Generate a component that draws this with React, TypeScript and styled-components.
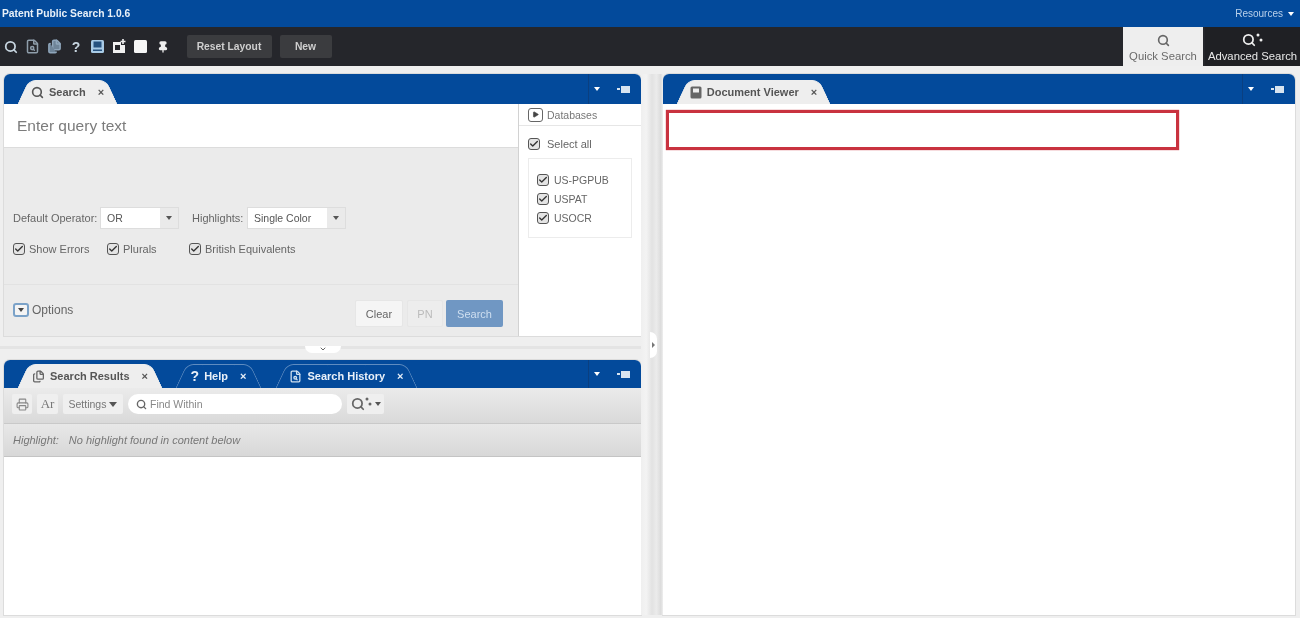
import React from "react";
import styled, { createGlobalStyle } from "styled-components";
import { Search, Printer, ChevronDown, Files, FileSearch, Check, Play, Pin } from "lucide-react";

const Global = createGlobalStyle`
  html, body { margin: 0; padding: 0; height: 100%; overflow: hidden; background: #efefef; }
  #root { height: 100%; }
  * { box-sizing: border-box; }
`;

const Page = styled.div`
  width: 1300px; height: 618px; display: flex; flex-direction: column;
  font-family: "Liberation Sans", Arial, sans-serif; color: #555; font-size: 11px;
  filter: blur(0.7px); background: #efefef; overflow: hidden;
`;
const TitleBar = styled.header`
  height: 27px; flex: none; background: #034a9b; color: #fff; display: flex; align-items: center; justify-content: space-between;
  padding: 0 6px 0 2px;
`;
const Brand = styled.span`font-size: 10.3px; font-weight: 700; color: #e8f0f8;`;
const ResourceLink = styled.span`font-size: 10px; color: #b9d0ea; display: flex; align-items: center; gap: 5px;`;
const Caret = styled.i<{ $c?: string; $s?: number }>`
  display: inline-block; width: 0; height: 0; flex: none;
  border-left: ${p => p.$s ?? 3}px solid transparent; border-right: ${p => p.$s ?? 3}px solid transparent;
  border-top: ${p => (p.$s ?? 3) + 1}px solid ${p => p.$c ?? "#fff"};
`;
const ToolBar = styled.div`
  height: 39px; flex: none; background: #25262b; display: flex; align-items: center;
`;
const IconSlot = styled.span`width: 21.7px; height: 20px; display: flex; align-items: center; justify-content: center; color: #c7d5e0; flex: none; font-weight: 700; font-size: 14px;`;
const DarkButton = styled.button<{ $w: number }>`
  width: ${p => p.$w}px; height: 23px; margin-left: 8px; background: #3b3c3f; color: #cfcfcf; border: 0; border-radius: 2px;
  font: 700 10.3px "Liberation Sans", Arial, sans-serif; padding: 0;
  &:first-of-type { margin-left: 13px; }
`;
const ModeTabs = styled.div`margin-left: auto; display: flex; height: 100%; gap: 2px;`;
const ModeTab = styled.div<{ $active?: boolean; $w: number }>`
  width: ${p => p.$w}px; height: 39px; display: flex; flex-direction: column; align-items: center; justify-content: flex-end; padding-bottom: 4px; gap: 3px;
  background: ${p => (p.$active ? "#eeeeee" : "#1f2024")}; color: ${p => (p.$active ? "#6b6b6b" : "#e8e8e8")}; font-size: 11.3px; white-space: nowrap;
`;
const Main = styled.main`
  flex: 1; display: flex; padding: 8px 5px 3px 4px; min-height: 0;
`;
const LeftColumn = styled.div`width: 637px; flex: none; display: flex; flex-direction: column;`;
const VSplitter = styled.div`
  width: 22px; flex: none; position: relative;
  background: linear-gradient(90deg, #efefef 0, #f3f3f3 24%, #e2e2e2 50%, #ebebeb 70%, #dcdcdc 90%, #efefef 100%);
`;
const VNotch = styled.span`
  position: absolute; left: 9px; top: 258px; width: 7px; height: 26px; background: #fff; border-radius: 0 8px 8px 0;
  display: flex; align-items: center; justify-content: center;
  &::after { content: ""; border-left: 3px solid #777; border-top: 3px solid transparent; border-bottom: 3px solid transparent; }
`;
const HSplitter = styled.div`
  height: 24px; flex: none; position: relative; display: flex; justify-content: center; align-items: center;
  &::before { content: ""; position: absolute; left: -4px; right: 0; top: 10px; height: 3px; background: #e4e4e4; }
`;
const HNotch = styled.span`
  position: relative; top: 1px; width: 36px; height: 7px; background: #fff; border-radius: 0 0 10px 10px; display: flex; align-items: center; justify-content: center;
`;
const Panel = styled.section<{ $h?: number; $grow?: boolean }>`
  ${p => (p.$h ? `height:${p.$h}px;flex:none;` : "")} ${p => (p.$grow ? "flex:1;min-height:0;" : "")}
  display: flex; flex-direction: column; background: #fff; box-shadow: 0 0 0 1px #dcdcdc; border-radius: 6px 6px 0 0;
`;
const RightPanel = styled(Panel)`flex: 1; min-width: 0;`;
const PanelHead = styled.div<{ $h: number }>`
  height: ${p => p.$h}px; flex: none; background: #034a9b; border-radius: 6px 6px 0 0; display: flex; align-items: flex-end; padding-left: 13px; overflow: hidden;
`;
const Tab = styled.div<{ $w: number; $active?: boolean; $h: number; $ml?: number }>`
  position: relative; width: ${p => p.$w}px; height: ${p => p.$h}px; margin-left: ${p => p.$ml ?? 0}px; flex: none;
  display: flex; align-items: center; justify-content: center; gap: 5px; font-size: 11px; font-weight: 700;
  color: ${p => (p.$active ? "#555" : "#e9f0f8")};
  z-index: 0;
  &::before, &::after {
    content: ""; position: absolute; top: 0; bottom: -1px; width: 55%; z-index: -1;
    background: ${p => (p.$active ? "#eeeeee" : "transparent")};
    border-top: 1px solid ${p => (p.$active ? "#eeeeee" : "#5f8cc0")};
  }
  &::before { left: 0; transform-origin: bottom left; transform: skewX(-25deg); border-left: 1px solid ${p => (p.$active ? "#eeeeee" : "#5f8cc0")}; border-right: 0; border-radius: 7px 0 0 0; }
  &::after { right: 0; transform-origin: bottom right; transform: skewX(25deg); border-right: 1px solid ${p => (p.$active ? "#eeeeee" : "#5f8cc0")}; border-radius: 0 7px 0 0; }
`;
const TabClose = styled.span<{ $light?: boolean }>`font-size: 11px; margin-left: 7px; font-weight: 700; color: ${p => (p.$light ? "#e9f0f8" : "#555")};`;
const HeadControls = styled.div<{ $h: number }>`
  margin-left: auto; width: 53px; height: ${p => p.$h}px; align-self: flex-start; border-left: 1px solid #0a3f80; display: flex; align-items: center; padding-left: 5px; gap: 21px; flex: none;
`;
const MiniList = styled.span`
  width: 9px; height: 7px; background: #d8e4f0; position: relative; flex: none;
  &::before { content: ""; position: absolute; left: -4px; top: 2.5px; width: 3px; height: 2px; background: #d8e4f0; }
`;
const SearchBody = styled.div`flex: 1; display: flex; min-height: 0;`;
const QueryColumn = styled.div`width: 515px; flex: none; display: flex; flex-direction: column; background: #ebebeb; border-right: 1px solid #d2d2d2;`;
const QueryInput = styled.div`
  height: 44px; flex: none; background: #fff; border-bottom: 1px solid #dcdcdc; padding: 13px 0 0 13px; font-size: 15.5px; color: #7c7c7c; line-height: 18px;
`;
const SelectRow = styled.div`margin-top: 60px; display: flex; align-items: center; padding-left: 9px; height: 20px;`;
const FieldLabel = styled.span<{ $ml?: number; $w: number }>`width: ${p => p.$w}px; margin-left: ${p => p.$ml ?? 0}px; font-size: 11px; color: #666; white-space: nowrap; flex: none;`;
const SelectBox = styled.div<{ $w: number }>`
  width: ${p => p.$w}px; height: 20px; background: #fff; box-shadow: 0 0 0 1px #ddd; display: flex; align-items: center; flex: none; padding-left: 6px; font-size: 10.5px; color: #555;
`;
const SelectArrow = styled.span`
  margin-left: auto; width: 18px; height: 100%; background: #eaeaea; display: flex; align-items: center; justify-content: center;
`;
const CheckRow = styled.div`
  margin-top: 13px; display: flex; align-items: center; padding-left: 9px; height: 16px;
`;
const CheckItem = styled.span<{ $w?: number }>`
  ${p => (p.$w ? `width:${p.$w}px;` : "")} flex: none; display: flex; align-items: center; gap: 4px; font-size: 11px; color: #666; white-space: nowrap;
`;
const CheckBox = styled.span`
  width: 12px; height: 12px; border: 1.5px solid #555; border-radius: 3px; background: #e4e4e4; display: flex; align-items: center; justify-content: center; color: #333; flex: none;
`;
const QueryFoot = styled.div`
  height: 51px; margin-top: 27px; border-top: 1px solid #e2e2e2; display: flex; padding: 15px 15px 0 9px; align-items: flex-start;
`;
const OptionsToggle = styled.span`
  display: flex; align-items: center; gap: 3px; font-size: 12px; color: #666; height: 20px;
`;
const OptionsIcon = styled.span`
  width: 16px; height: 14px; border: 2px solid #7ba2c8; border-radius: 3px; display: flex; align-items: center; justify-content: center; background: #f4f4f4;
`;
const Buttons = styled.div`margin-left: auto; display: flex; gap: 4px;`;
const PlainButton = styled.button<{ $w: number; $muted?: boolean }>`
  width: ${p => p.$w}px; height: 27px; padding: 0; border: 1px solid #e6e6e6; border-radius: 2px; background: ${p => (p.$muted ? "#ededed" : "#f5f5f5")};
  color: ${p => (p.$muted ? "#bbb" : "#666")}; font: 11px "Liberation Sans", Arial, sans-serif;
`;
const PrimaryButton = styled.button`
  width: 57px; height: 27px; padding: 0; border: 0; border-radius: 2px; background: #7097c3; color: #cfdff0; font: 11px "Liberation Sans", Arial, sans-serif; margin-left: -1px;
`;
const DbColumn = styled.aside`flex: 1; display: flex; flex-direction: column; background: #fff;`;
const DbHead = styled.div`
  height: 22px; flex: none; border-bottom: 1px solid #e6e6e6; display: flex; align-items: center; padding-left: 9px; gap: 4px; font-size: 10.5px; color: #777;
`;
const DbPlay = styled.span`
  width: 15px; height: 14px; border: 1.5px solid #666; border-radius: 3px; display: flex; align-items: center; justify-content: center; color: #444;
`;
const SelectAll = styled(CheckItem)`margin: 11px 0 0 9px; gap: 7px; height: 13px;`;
const DbBox = styled.div`
  margin: 8px 9px 0 9px; height: 80px; border: 1px solid #ececec; padding: 14px 0 0 8px; display: flex; flex-direction: column; gap: 6px;
`;
const DbItem = styled(CheckItem)`height: 13px; gap: 5px; font-size: 10.5px;`;
const ResultsTools = styled.div`
  height: 36px; flex: none; background: linear-gradient(#ebebeb, #d9d9d9); border-bottom: 1px solid #c9c9c9; display: flex; align-items: center; padding: 0 0 3px 8px; gap: 5px;
`;
const ToolBtn = styled.span<{ $w: number }>`
  width: ${p => p.$w}px; height: 20px; background: #efefef; border-radius: 2px; display: flex; align-items: center; justify-content: center; gap: 3px; flex: none; font-size: 10.5px; color: #777;
`;
const FontToolGlyph = styled.span`font-family: "Liberation Serif", serif; font-size: 13px; color: #777;`;
const FindWithin = styled.div`
  width: 214px; height: 20px; flex: none; background: #fff; border-radius: 10px; display: flex; align-items: center; padding-left: 8px; gap: 3px; font-size: 10.5px; color: #888;
`;
const HighlightBar = styled.div`
  height: 33px; flex: none; background: linear-gradient(#e8e8e8, #d8d8d8); border-bottom: 1px solid #c4c4c4; display: flex; align-items: center; padding-left: 9px; gap: 10px; font-style: italic; font-size: 11px; color: #777;
`;
const ViewerBody = styled.div`flex: 1; padding: 6px 0 0 3px; background: #fff;`;
const RedBox = styled.div`width: 513px; height: 40px; border: 3px solid #c9323f; box-shadow: 0 0 1px #c9323f;`;
const FillWhite = styled.div`flex: 1; background: #fff;`;
const AdvGlyph = styled.span<{ $c: string }>`display: flex; align-items: flex-start; color: ${p => p.$c};`;

const Ck = () => <CheckBox><Check size={10} strokeWidth={3.2} /></CheckBox>;
const BookIcon = () => (
  <svg width="12" height="13" viewBox="0 0 12 13"><rect x=".5" y=".5" width="11" height="12" rx="1.5" fill="#666" /><rect x="3" y="2.5" width="6" height="4" fill="#eee" /></svg>
);
const DocIcon = () => (
  <svg width="15" height="15" viewBox="0 0 15 15"><rect x="1" y="1" width="13" height="13" rx="1.5" fill="#a9cbe6" /><rect x="3.5" y="2.5" width="8" height="6" fill="#26527f" /><rect x="3" y="10.5" width="9" height="1.5" fill="#26527f" /></svg>
);
const NewDocIcon = () => (
  <svg width="15" height="15" viewBox="0 0 15 15"><path d="M1 3h8v3h4v8H1z" fill="#f0f0f0" /><rect x="3" y="6" width="5" height="5" fill="#25262b" /><path d="M11 0v5M8.5 2.5h5" stroke="#f0f0f0" strokeWidth="1.6" /></svg>
);
const AdvIcon = ({ c }: { c: string }) => (
  <AdvGlyph $c={c}>
    <Search size={14} strokeWidth={3} />
    <svg width="7" height="10" viewBox="0 0 7 10"><circle cx="2" cy="2" r="1.5" fill={c} /><circle cx="5" cy="7" r="1.5" fill={c} /></svg>
  </AdvGlyph>
);
const Controls = ({ h }: { h: number }) => (
  <HeadControls $h={h}><Caret $s={3} /><MiniList /></HeadControls>
);

export default function App() {
  return (
    <Page>
      <Global />
      <TitleBar>
        <Brand>Patent Public Search 1.0.6</Brand>
        <ResourceLink>Resources <Caret /></ResourceLink>
      </TitleBar>
      <ToolBar>
        <IconSlot><Search size={14} strokeWidth={3} /></IconSlot>
        <IconSlot><FileSearch size={15} strokeWidth={2.4} color="#8f9eab" /></IconSlot>
        <IconSlot><Files size={15} strokeWidth={2.4} color="#8fa6bb" fill="#6f8599" /></IconSlot>
        <IconSlot>?</IconSlot>
        <IconSlot><DocIcon /></IconSlot>
        <IconSlot><NewDocIcon /></IconSlot>
        <IconSlot><svg width="13" height="13" viewBox="0 0 13 13"><rect width="13" height="13" rx="1.5" fill="#f6f6f6" /></svg></IconSlot>
        <IconSlot><Pin size={12} strokeWidth={2.6} fill="#eee" color="#eee" /></IconSlot>
        <DarkButton $w={85}>Reset Layout</DarkButton>
        <DarkButton $w={52}>New</DarkButton>
        <ModeTabs>
          <ModeTab $active $w={80}><Search size={13} strokeWidth={3} color="#666" />Quick Search</ModeTab>
          <ModeTab $w={95}><AdvIcon c="#eee" />Advanced Search</ModeTab>
        </ModeTabs>
      </ToolBar>
      <Main>
        <LeftColumn>
          <Panel $h={262}>
            <PanelHead $h={30}>
              <Tab $active $w={101} $h={24}>
                <Search size={13} strokeWidth={3} />Search<TabClose>×</TabClose>
              </Tab>
              <Controls h={30} />
            </PanelHead>
            <SearchBody>
              <QueryColumn>
                <QueryInput>Enter query text</QueryInput>
                <SelectRow>
                  <FieldLabel $w={88}>Default Operator:</FieldLabel>
                  <SelectBox $w={77}>OR<SelectArrow><Caret $c="#555" /></SelectArrow></SelectBox>
                  <FieldLabel $w={56} $ml={14}>Highlights:</FieldLabel>
                  <SelectBox $w={97}>Single Color<SelectArrow><Caret $c="#555" /></SelectArrow></SelectBox>
                </SelectRow>
                <CheckRow>
                  <CheckItem $w={94}><Ck />Show Errors</CheckItem>
                  <CheckItem $w={82}><Ck />Plurals</CheckItem>
                  <CheckItem><Ck />British Equivalents</CheckItem>
                </CheckRow>
                <QueryFoot>
                  <OptionsToggle><OptionsIcon><Caret $c="#444" /></OptionsIcon>Options</OptionsToggle>
                  <Buttons>
                    <PlainButton $w={48}>Clear</PlainButton>
                    <PlainButton $w={36} $muted>PN</PlainButton>
                    <PrimaryButton>Search</PrimaryButton>
                  </Buttons>
                </QueryFoot>
              </QueryColumn>
              <DbColumn>
                <DbHead><DbPlay><Play size={7} fill="#444" /></DbPlay>Databases</DbHead>
                <SelectAll><Ck />Select all</SelectAll>
                <DbBox>
                  <DbItem><Ck />US-PGPUB</DbItem>
                  <DbItem><Ck />USPAT</DbItem>
                  <DbItem><Ck />USOCR</DbItem>
                </DbBox>
              </DbColumn>
            </SearchBody>
          </Panel>
          <HSplitter><HNotch><ChevronDown size={8} strokeWidth={3} color="#666" /></HNotch></HSplitter>
          <Panel $grow>
            <PanelHead $h={28}>
              <Tab $active $w={146} $h={24}>
                <Files size={13} strokeWidth={2.4} color="#666" />Search Results<TabClose>×</TabClose>
              </Tab>
              <Tab $w={87} $h={24} $ml={12}>
                <span style={{ fontSize: 14 }}>?</span>Help<TabClose $light>×</TabClose>
              </Tab>
              <Tab $w={143} $h={24} $ml={13}>
                <FileSearch size={13} strokeWidth={2.4} color="#cfe0f0" />Search History<TabClose $light>×</TabClose>
              </Tab>
              <Controls h={28} />
            </PanelHead>
            <ResultsTools>
              <ToolBtn $w={20}><Printer size={13} color="#888" /></ToolBtn>
              <ToolBtn $w={21}><FontToolGlyph>Ar</FontToolGlyph></ToolBtn>
              <ToolBtn $w={60}>Settings <Caret $c="#555" $s={4} /></ToolBtn>
              <FindWithin><Search size={11} strokeWidth={3} color="#666" />Find Within</FindWithin>
              <ToolBtn $w={37}><AdvIcon c="#666" /><Caret $c="#555" /></ToolBtn>
            </ResultsTools>
            <HighlightBar><span>Highlight:</span><span>No highlight found in content below</span></HighlightBar>
            <FillWhite />
          </Panel>
        </LeftColumn>
        <VSplitter><VNotch /></VSplitter>
        <RightPanel>
          <PanelHead $h={30}>
            <Tab $active $w={155} $h={24}>
              <BookIcon />Document Viewer<TabClose>×</TabClose>
            </Tab>
            <Controls h={30} />
          </PanelHead>
          <ViewerBody><RedBox /></ViewerBody>
        </RightPanel>
      </Main>
    </Page>
  );
}
